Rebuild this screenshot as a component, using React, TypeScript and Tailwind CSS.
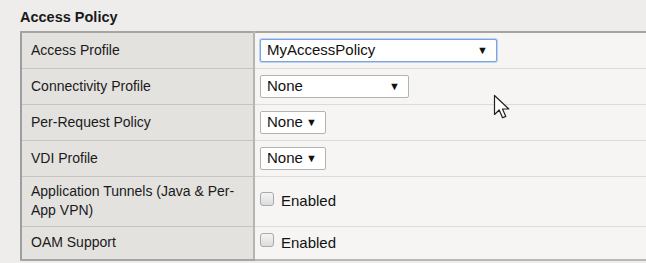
import React from 'react';

type Row = {
  label: string;
  kind: 'select' | 'check';
  value?: string;
  width?: string;
  focused?: boolean;
  h: string;
};

const ROWS: Row[] = [
  { label: 'Access Profile', kind: 'select', value: 'MyAccessPolicy', width: 'w-[237px]', focused: true, h: 'h-[36px]' },
  { label: 'Connectivity Profile', kind: 'select', value: 'None', width: 'w-[149px]', h: 'h-[36px]' },
  { label: 'Per-Request Policy', kind: 'select', value: 'None', width: 'w-[66px]', h: 'h-[36px]' },
  { label: 'VDI Profile', kind: 'select', value: 'None', width: 'w-[66px]', h: 'h-[36px]' },
  { label: 'Application Tunnels (Java & Per-App VPN)', kind: 'check', h: 'h-[50px]' },
  { label: 'OAM Support', kind: 'check', h: 'h-[34px]' },
];

const SelectBox: React.FC<{ value: string; width: string; focused?: boolean }> = ({ value, width, focused }) => (
  <div
    className={`${width} h-[23px] flex items-center justify-between bg-white rounded-[2px] pl-[6px] pr-[8px] text-[15px] text-[#111] ${
      focused ? 'border border-[#7aa3e0] shadow-[0_0_0_1px_#bcd2f3]' : 'border border-[#b3b3b3]'
    }`}
  >
    <span>{value}</span>
    <span className="text-[11px] leading-none">▼</span>
  </div>
);

const Checkbox: React.FC = () => (
  <label className="flex items-center gap-[7px] text-[15px] text-[#111]">
    <span className="w-[14px] h-[14px] -mt-[5px] rounded-[3px] border border-[#a9a9a9] bg-linear-to-b from-[#f4f4f4] to-[#dcdcdc]" />
    <span>Enabled</span>
  </label>
);

export default function App() {
  return (
    <div className="relative w-[646px] h-[263px] overflow-hidden bg-[#eeedeb] pl-5 pt-[8px] font-['Liberation_Sans',Arial,sans-serif] text-[#1a1a1a]">
      <div className="font-bold text-[14.5px] leading-[18px] mb-[5px]">Access Policy</div>

      <table className="w-[626px] border-collapse table-fixed">
        <tbody>
          {ROWS.map((row, i) => (
            <tr key={row.label} className={row.h}>
              <td
                className={`w-[233px] bg-[#e3e2df] border-l-2 border-l-[#9e9e9e] border-r-2 border-r-[#b4b4b2] pl-[9px] pr-[4px] text-[14px] leading-[19px] align-middle ${
                  i === 0 ? 'border-t-2 border-t-[#a5a5a3]' : ''
                } ${i === ROWS.length - 1 ? 'border-b-2 border-b-[#a5a5a3]' : 'border-b border-b-[#c6c5c3]'}`}
              >
                {row.label}
              </td>
              <td
                className={`bg-[#f6f5f3] pl-[5px] align-middle ${i === 0 ? 'border-t-2 border-t-[#a5a5a3]' : ''} ${
                  i === ROWS.length - 1 ? 'border-b-2 border-b-[#b8b8b6]' : 'border-b border-b-[#dcdbd9]'
                }`}
              >
                {row.kind === 'select' ? (
                  <SelectBox value={row.value!} width={row.width!} focused={row.focused} />
                ) : (
                  <Checkbox />
                )}
              </td>
            </tr>
          ))}
        </tbody>
      </table>

      {/* mouse pointer */}
      <svg className="absolute left-[493px] top-[94px]" width="19" height="27" viewBox="0 0 19 27">
        <path
          d="M1.5 1.5 L1.5 20.5 L6.2 16 L9.6 23.8 L12.8 22.4 L9.5 15 L15.8 15 Z"
          fill="#fff"
          stroke="#222"
          strokeWidth="1.2"
          strokeLinejoin="round"
        />
      </svg>
    </div>
  );
}
